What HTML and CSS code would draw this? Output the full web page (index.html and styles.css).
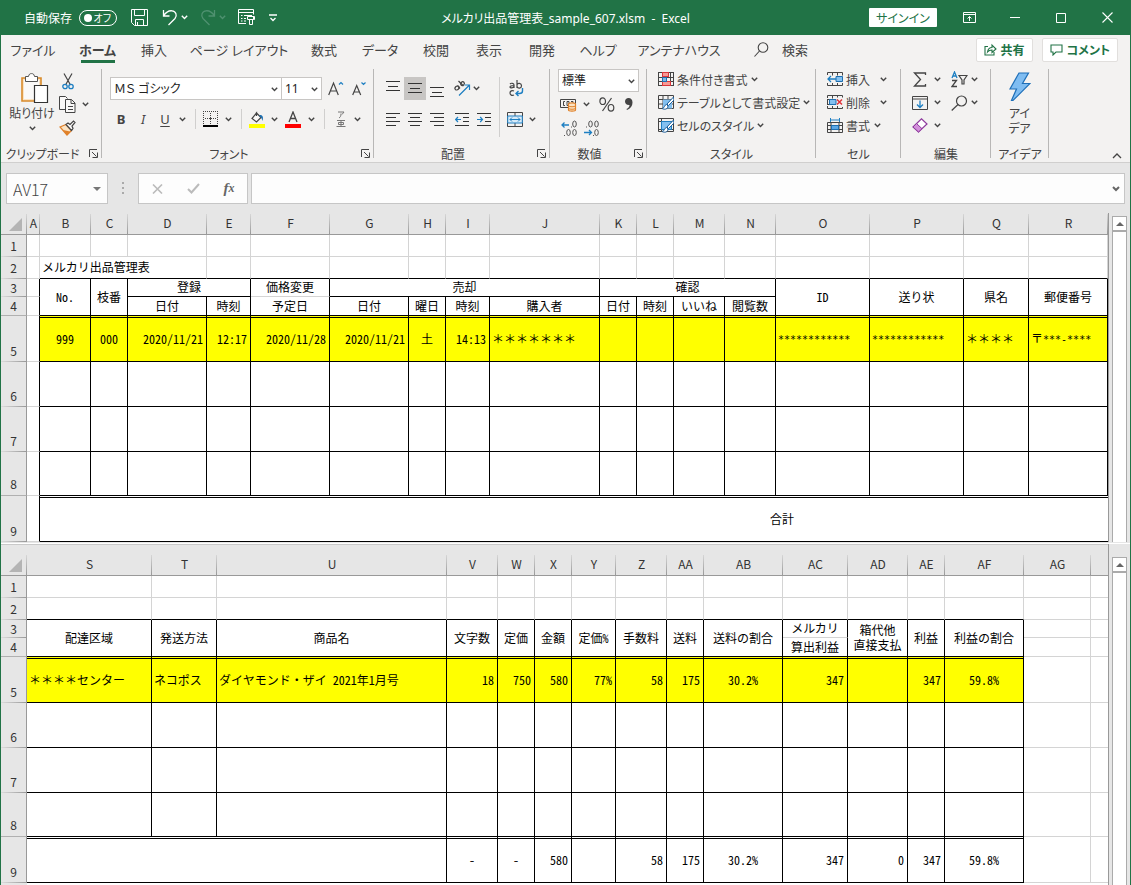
FILE: index.html
```html
<!DOCTYPE html>
<html lang="ja">
<head>
<meta charset="utf-8">
<meta name="viewport" content="width=device-width, initial-scale=1">
<title>メルカリ出品管理表_sample_607.xlsm - Excel</title>
<link rel="stylesheet" href="styles.css">
</head>
<body>
<svg class="defs" aria-hidden="true">
  <symbol id="chev" viewBox="0 0 7 5"><path d="M.8 .8 3.5 3.5 6.2 .8" fill="none" stroke="currentColor" stroke-width="1.4"/></symbol>
  <symbol id="launch" viewBox="0 0 9 9"><path d="M.5 8V.5H8M3 3l4.5 4.5M8.500 3.500v5h-5" fill="none" stroke="#444"/></symbol>
  <symbol id="tri" viewBox="0 0 8 4"><path d="M4 0 8 4H0Z" fill="#666"/></symbol>
  <symbol id="corner" viewBox="0 0 13 13"><path d="M13 0V13H0Z" fill="#b4b4b4"/></symbol>
</svg>
<div class="app">
  <header class="titlebar">
    <div class="quick">
      <label class="autosave" for="autosave">自動保存</label>
      <span class="toggle"><input type="checkbox" id="autosave"><span>オフ</span></span>
      <button class="q-save" aria-label="保存"><svg width="17" height="17" viewBox="0 0 17 17" fill="none" stroke="#fff"><path d="M.5 .5h16v16H3.500L.5 13.500ZM3.500 .5v6h10v-6M4.500 16.500v-6h8v6M6.500 13v3"/></svg></button>
      <button class="q-undo" aria-label="元に戻す"><svg width="16" height="17" viewBox="0 0 16 17" fill="none" stroke="#fff" stroke-width="1.3"><path d="M1.500 1v6h6M1.500 7C4 3 7 1.500 10 1.800c4 .4 5.500 4.700 3 7.700L6.500 16"/></svg></button>
      <button class="q-chev" aria-label="元に戻す履歴"><svg width="7" height="5"><use href="#chev"/></svg></button>
      <button class="q-undo dim" aria-label="やり直し"><svg width="16" height="17" viewBox="0 0 16 17" fill="none" stroke="currentColor" stroke-width="1.3"><path d="M14.500 1v6h-6M14.500 7C12 3 9 1.500 6 1.800 2 2.200.5 6.500 3 9.500L9.500 16"/></svg></button>
      <button class="q-chev dim" aria-label="やり直し履歴"><svg width="7" height="5"><use href="#chev"/></svg></button>
      <button class="q-form" aria-label="フォーム"><svg width="17" height="17" viewBox="0 0 17 17" fill="none" stroke="#fff"><path d="M8 14.500H.5V.5h15v5M.5 3.500h15M3 6.500h1.500M6 6.500h8M3 9.500h1.500M6 9.500h2M3 12h1.500M6 12h2M9.500 7.500h6v3h-6ZM11.500 10.500v5h3v-5M14.500 7.500h2v3h-1"/></svg></button>
      <button class="q-more" aria-label="クイック アクセス ツール バーのユーザー設定"><svg width="8" height="8" viewBox="0 0 8 8" fill="none" stroke="#fff" stroke-width="1.300"><path d="M0 1h8M1.500 4 4 6.500 6.500 4"/></svg></button>
    </div>
    <h1>メルカリ出品管理表_sample_607.xlsm&nbsp; -&nbsp; Excel</h1>
    <div class="wincontrols">
      <button class="signin">サインイン</button>
      <button aria-label="リボンの表示オプション"><svg width="13" height="11" viewBox="0 0 13 11" fill="none" stroke="#fff"><path d="M.5 .5h12v10H.5ZM.5 2.500h12M6.500 9V4.500M4.500 6.500l2-2 2 2"/></svg></button>
      <button aria-label="最小化"><svg width="10" height="11" viewBox="0 0 10 11" stroke="#fff"><path d="M0 5.500h10"/></svg></button>
      <button aria-label="最大化"><svg width="10" height="10" viewBox="0 0 10 10" fill="none" stroke="#fff"><path d="M.5 .5h9v9h-9Z"/></svg></button>
      <button aria-label="閉じる"><svg width="11" height="11" viewBox="0 0 11 11" fill="none" stroke="#fff" stroke-width="1.100"><path d="M.5 .5l10 10M10.500 .5l-10 10"/></svg></button>
    </div>
  </header>

  <nav class="tabs">
    <div class="tablist">
      <a href="#">ファイル</a><a href="#" class="active">ホーム</a><a href="#">挿入</a><a href="#">ページ レイアウト</a><a href="#">数式</a><a href="#">データ</a><a href="#">校閲</a><a href="#">表示</a><a href="#">開発</a><a href="#">ヘルプ</a><a href="#">アンテナハウス</a>
    </div>
    <button class="search"><svg width="15" height="15" viewBox="0 0 15 15" fill="none" stroke="#444" stroke-width="1.100"><circle cx="9" cy="5.500" r="4.800"/><path d="M5.500 9 .5 14.500"/></svg>検索</button>
    <div class="tabactions">
      <button><svg width="13" height="13" viewBox="0 0 13 13" fill="none" stroke="#217346" stroke-width="1.100"><path d="M4 3.500H1v8.500h9V9M3.500 9c.5-3 2-4.500 4.500-4.500V2l4 4-4 3.500V7C6 7 4.700 7.500 3.500 9Z"/></svg>共有</button>
      <button><svg width="13" height="12" viewBox="0 0 13 12" fill="none" stroke="#217346" stroke-width="1.100"><path d="M1 1h11v7H6l-3 3V8H1Z"/></svg>コメント</button>
    </div>
  </nav>

  <section class="ribbon" aria-label="リボン">
    <div class="group g-clip">
      <div class="gbody">
        <button class="paste"><svg width="28" height="31" viewBox="0 0 28 31" fill="none"><path d="M1 5h19v23H1Z" fill="#fbe3c3" stroke="#d98b2b" stroke-width="1.600"/><path d="M3 7h15v19H3Z" fill="#faf9f8"/><path d="M4.500 8.500v-5h3C8 1 9 .6 10.500 .6S13 1 13.500 3.500h3v5Z" fill="#fff" stroke="#555"/><path d="M13.500 12.500h13v17h-13Z" fill="#fff" stroke="#333" stroke-width="1.200"/></svg><span>貼り付け</span><svg width="7" height="5"><use href="#chev"/></svg></button>
        <div class="clipcol">
          <button aria-label="切り取り"><svg width="12" height="17" viewBox="0 0 12 17" fill="none"><path d="M2 .5 8.500 12M10 .5 3.500 12" stroke="#444" stroke-width="1.200"/><circle cx="3" cy="13.500" r="2.200" stroke="#1e7fc2" stroke-width="1.300"/><circle cx="9" cy="13.500" r="2.200" stroke="#1e7fc2" stroke-width="1.300"/></svg></button>
          <button aria-label="コピー" class="copy"><svg width="17" height="17" viewBox="0 0 17 17" fill="#faf9f8" stroke="#444"><path d="M7 13.500H.5V.5h6l2 2"/><path d="M6.500 3.500h6l3.500 3.500v9.500H6.500ZM12 3.500V7.500h4M9 10.500h5M9 13.500h5"/></svg><svg width="7" height="5"><use href="#chev"/></svg></button>
          <button aria-label="書式のコピー"><svg width="17" height="16" viewBox="0 0 17 16"><path d="M1 7 7 4.500l5.500 6L8 15Z" fill="#fbe3c3" stroke="#e0812a" stroke-width="1.300"/><path d="M4 10l7 1.500L8 15Z" fill="#e0812a"/><path d="M7 4.500l2-1.500 2 1.500 3.500-3.500 1.500 1.500-3 3.500 1 2.500-1.500 2Z" fill="#faf9f8" stroke="#444" stroke-width="1.200"/></svg></button>
        </div>
      </div>
      <div class="glabel"><span>クリップボード</span><button aria-label="クリップボードの詳細"><svg width="9" height="9"><use href="#launch"/></svg></button></div>
    </div>

    <div class="group g-font">
      <div class="gbody">
        <div class="fontrow1">
          <span class="combo"><select aria-label="フォント"><option>ＭＳ ゴシック</option></select><svg width="7" height="5"><use href="#chev"/></svg></span>
          <span class="combo"><select aria-label="フォント サイズ"><option>11</option></select><svg width="7" height="5"><use href="#chev"/></svg></span>
          <button aria-label="フォント サイズの拡大"><svg width="16" height="15" viewBox="0 0 16 15" fill="none" stroke="#444" stroke-width="1.200"><path d="M.7 14 5.500 2l4.800 12M2.500 10h6"/><path d="M11 3.500l2-2 2 2" stroke="#1e7fc2"/></svg></button>
          <button aria-label="フォント サイズの縮小"><svg width="15" height="15" viewBox="0 0 15 15" fill="none" stroke="#444" stroke-width="1.200"><path d="M.7 14 4.700 4.500l4 9.500M2.300 11h5"/><path d="M9.500 1.500l2 2 2-2" stroke="#1e7fc2"/></svg></button>
        </div>
        <div class="fontrow2">
          <button class="b">B</button><button class="i">I</button><button class="u">U</button><button aria-label="下線の種類"><svg width="7" height="5"><use href="#chev"/></svg></button>
          <i class="vsep"></i>
          <button aria-label="罫線"><svg width="16" height="16" viewBox="0 0 16 16" fill="#444" shape-rendering="crispEdges"><path d="M0 0h1v1H0ZM2 0h1v1H2ZM4 0h1v1H4ZM6 0h1v1H6ZM8 0h1v1H8ZM10 0h1v1h-1ZM12 0h1v1h-1ZM14 0h1v1h-1ZM0 2h1v1H0ZM0 4h1v1H0ZM0 6h1v1H0ZM0 8h1v1H0ZM0 10h1v1H0ZM0 12h1v1H0ZM14 2h1v1h-1ZM14 4h1v1h-1ZM14 6h1v1h-1ZM14 8h1v1h-1ZM14 10h1v1h-1ZM14 12h1v1h-1ZM7 2h1v1H7ZM7 4h1v1H7ZM7 10h1v1H7ZM7 12h1v1H7ZM2 7h1v1H2ZM4 7h1v1H4ZM10 7h1v1h-1ZM12 7h1v1h-1ZM6 7h3v1H6ZM7 6h1v3H7Z"/><path d="M0 14h15v2H0Z" fill="#000"/></svg></button>
          <button aria-label="罫線の種類"><svg width="7" height="5"><use href="#chev"/></svg></button>
          <i class="vsep"></i>
          <button aria-label="塗りつぶしの色"><svg width="17" height="17" viewBox="0 0 17 17" fill="none"><path d="M7 1.500 12 6.500 7.500 11 3 7.500 7.500 2V5" fill="#faf9f8" stroke="#444" stroke-width="1.200"/><path d="M11 4c3 0 3.500 2.500 2.500 6C12.500 7 12 6 10 5Z" fill="#1e6fb0"/><path d="M0 13h16v4H0Z" fill="#ff0"/></svg></button>
          <button aria-label="塗りつぶしの色の一覧"><svg width="7" height="5"><use href="#chev"/></svg></button>
          <button aria-label="フォントの色"><svg width="17" height="17" viewBox="0 0 17 17" fill="none"><path d="M4 11 8 1l4 10M5.500 7.500h5" stroke="#444" stroke-width="1.300"/><path d="M0 13h16v4H0Z" fill="#f00"/></svg></button>
          <button aria-label="フォントの色の一覧"><svg width="7" height="5"><use href="#chev"/></svg></button>
          <i class="vsep"></i>
          <button aria-label="ふりがな"><svg width="10" height="17" viewBox="0 0 10 17" fill="none" stroke="#777"><path d="M2 1h6L6 3.500M5 2.500C5 5 4.500 6 3 7M1 9.500h8M2.500 11.500h5v2h-5ZM5 9.500v6M.5 15.500h9"/></svg></button>
          <button aria-label="ふりがなの設定"><svg width="7" height="5"><use href="#chev"/></svg></button>
        </div>
      </div>
      <div class="glabel"><span>フォント</span><button aria-label="フォントの詳細"><svg width="9" height="9"><use href="#launch"/></svg></button></div>
    </div>

    <div class="group g-align">
      <div class="gbody">
        <div class="aligngrid">
          <button aria-label="上揃え"><svg width="14" height="20" viewBox="0 0 14 20" stroke="#333"><path d="M0 2.500h14M2 7.500h10M0 11.500h14"/></svg></button>
          <button aria-label="上下中央揃え" class="on"><svg width="14" height="20" viewBox="0 0 14 20" stroke="#333"><path d="M0 4.500h14M2 9.500h10M0 13.500h14"/></svg></button>
          <button aria-label="下揃え"><svg width="14" height="20" viewBox="0 0 14 20" stroke="#333"><path d="M0 8.500h14M2 13.500h10M0 17.500h14"/></svg></button>
          <button aria-label="方向"><svg width="18" height="17" viewBox="0 0 18 17" fill="none"><g stroke="#444" stroke-width="1.200"><ellipse cx="4" cy="8" rx="2.200" ry="1.800" transform="rotate(-45 4 8)"/><path d="M4.500 5.500 7 8.500"/><path d="M5.500 1 10.500 6"/><ellipse cx="9.500" cy="3.700" rx="2" ry="1.700" transform="rotate(-45 9.500 3.700)"/></g><path d="M6 15.500 16 5.500M11.500 5h5v5" stroke="#1e7fc2" stroke-width="1.200"/></svg></button>
          <button class="start" aria-label="方向の一覧"><svg width="7" height="5"><use href="#chev"/></svg></button>
          <button aria-label="左揃え"><svg width="14" height="14" viewBox="0 0 14 14" stroke="#333"><path d="M0 .5h14M0 4.500h10M0 8.500h14M0 12.500h10"/></svg></button>
          <button aria-label="中央揃え"><svg width="14" height="14" viewBox="0 0 14 14" stroke="#333"><path d="M0 .5h14M2 4.500h10M0 8.500h14M2 12.500h10"/></svg></button>
          <button aria-label="右揃え"><svg width="14" height="14" viewBox="0 0 14 14" stroke="#333"><path d="M0 .5h14M4 4.500h10M0 8.500h14M4 12.500h10"/></svg></button>
          <button aria-label="インデントを減らす"><svg width="14" height="14" viewBox="0 0 14 14" fill="none" stroke="#333"><path d="M0 .5h14M8 4.500h6M8 8.500h6M0 12.500h14"/><path d="M6 6.500H.7M3 4 .7 6.500 3 9" stroke="#1e7fc2" stroke-width="1.200"/></svg></button>
          <button aria-label="インデントを増やす"><svg width="14" height="14" viewBox="0 0 14 14" fill="none" stroke="#333"><path d="M0 .5h14M8 4.500h6M8 8.500h6M0 12.500h14"/><path d="M0 6.500h5.500M3.200 4l2.300 2.500L3.200 9" stroke="#1e7fc2" stroke-width="1.200"/></svg></button>
        </div>
        <div class="wrapcol">
          <button aria-label="折り返して全体を表示する"><svg width="15" height="17" viewBox="0 0 15 17" fill="none" stroke="#444" stroke-width="1.200"><path d="M1 4c1-1.200 4-1 4 1v3M5 5.500C2.500 5.500 1 6 1 7s3 1.300 4-.5M8 0v8M8 5c.5-2.500 4.500-2 4.500 .7S9 9 8 6.500M5 11c-2-1-4 0-4 2s2 3 4 2"/><path d="M13.500 8v3c0 1.500-1 2.500-3 2.500H7M9.500 11 7 13.500 9.500 16" stroke="#1e7fc2" stroke-width="1.400"/></svg></button>
          <button aria-label="セルを結合して中央揃え" class="merge"><svg width="16" height="15" viewBox="0 0 16 15" fill="none"><path d="M.5 .5h15v14H.5ZM8 0v4M8 11v4" stroke="#444"/><path d="M.7 4h14.600v7H.7Z" fill="#d6eaf8" stroke="#1e7fc2"/><path d="M3 7.500h10M5 5.500l-2 2 2 2M11 5.500l2 2-2 2" stroke="#1e7fc2"/></svg><svg width="7" height="5"><use href="#chev"/></svg></button>
        </div>
      </div>
      <div class="glabel"><span>配置</span><button aria-label="配置の詳細"><svg width="9" height="9"><use href="#launch"/></svg></button></div>
    </div>

    <div class="group g-num">
      <div class="gbody">
        <span class="combo"><select aria-label="数値の書式"><option>標準</option></select><svg width="7" height="5"><use href="#chev"/></svg></span>
        <div class="numrow">
          <button aria-label="通貨表示形式"><svg width="17" height="15" viewBox="0 0 17 15" fill="none"><path d="M.5 2.500h15v8H.5Z" stroke="#444"/><path d="M5 4.500H3.500v4H5M7 4.500v4h2v-4ZM11 4.500h2v2" stroke="#444"/><path d="M8.500 7c0-1.500 7-1.500 7 0v6c0 1.500-7 1.500-7 0Z" fill="#fbe3c3" stroke="#e0812a" stroke-width="1.200"/><path d="M8.500 9c1 1 6 1 7 0M8.500 11.500c1 1 6 1 7 0" stroke="#e0812a"/></svg></button>
          <button aria-label="通貨の一覧"><svg width="7" height="5"><use href="#chev"/></svg></button>
          <button aria-label="パーセント スタイル"><svg width="16" height="15" viewBox="0 0 16 15" fill="none" stroke="#444" stroke-width="1.200"><ellipse cx="3.700" cy="4.200" rx="2.800" ry="3.300"/><ellipse cx="12" cy="10.800" rx="2.800" ry="3.300"/><path d="M12.500 1 3.500 14"/></svg></button>
          <button aria-label="桁区切りスタイル"><svg width="10" height="14" viewBox="0 0 10 14"><path d="M4.500 1C7 1 8.500 2.500 8.500 5.500c0 3.500-2 6-5.500 7.500l-.5-1c2-1 3-2.200 3-4C2.500 8.200 1 6.500 1 4.500S2.500 1 4.500 1Z" fill="#444"/></svg></button>
        </div>
        <div class="decrow">
          <button aria-label="小数点以下の表示桁数を増やす"><svg width="17" height="17" viewBox="0 0 17 17" fill="none" stroke="#555"><ellipse cx="13.500" cy="4" rx="1.800" ry="3"/><path d="M10 7h1M3 15.500h1"/><ellipse cx="7.500" cy="12.500" rx="1.800" ry="3"/><ellipse cx="13.500" cy="12.500" rx="1.800" ry="3"/><path d="M8 5H1M3.500 2.500 1 5l2.500 2.500" stroke="#1e7fc2" stroke-width="1.300"/></svg></button>
          <button aria-label="小数点以下の表示桁数を減らす"><svg width="17" height="17" viewBox="0 0 17 17" fill="none" stroke="#555"><path d="M3 7h1M10 15.500h1"/><ellipse cx="7.500" cy="4" rx="1.800" ry="3"/><ellipse cx="13.500" cy="4" rx="1.800" ry="3"/><ellipse cx="13.500" cy="12.500" rx="1.800" ry="3"/><path d="M1 12.500h7.500M6 10l2.500 2.500L6 15" stroke="#1e7fc2" stroke-width="1.300"/></svg></button>
        </div>
      </div>
      <div class="glabel"><span>数値</span><button aria-label="数値の詳細"><svg width="9" height="9"><use href="#launch"/></svg></button></div>
    </div>

    <div class="group g-style">
      <div class="gbody rows">
        <button><svg width="16" height="15" viewBox="0 0 16 15" shape-rendering="crispEdges" fill="none"><path d="M.5 .5h15v13H.5ZM.5 5h15M.5 9.500h15M4 .5v13M12 .5v13" stroke="#444"/><path d="M4 .5h6v4H4ZM4 9.500h8v4H4Z" fill="#f79a94" stroke="#d9363b"/><path d="M4 5h4v4H4Z" fill="#83b9e6" stroke="#1e6fb0"/></svg>条件付き書式<svg width="7" height="5"><use href="#chev"/></svg></button>
        <button><svg width="16" height="15" viewBox="0 0 16 15" fill="none"><path d="M.5 .5h15v13H.5ZM.5 4.500h15M.5 9h15M5 .5v13M10 .5v13" stroke="#444"/><path d="M5 4.500h9v9H5Z" fill="#83c0f0"/><path d="M15.500 2 9 9l1.500 1.500L16 5ZM8.500 9.500C6 10 7 13 4 13.500c3 1.500 6 .5 6-2.500Z" fill="#fff" stroke="#1e5f9a"/></svg>テーブルとして書式設定<svg width="7" height="5"><use href="#chev"/></svg></button>
        <button><svg width="16" height="15" viewBox="0 0 16 15" fill="none"><path d="M.5 .5h15v13H.5ZM3.500 .5v13M.5 3.500h15M.5 11.500h15" stroke="#444"/><path d="M3.500 3.500h10v8h-10Z" fill="#83c0f0" stroke="#1e7fc2"/><path d="M15.500 2 9 9l1.500 1.500L16 5ZM8.500 9.500C6 10 7 13 4 13.500c3 1.500 6 .5 6-2.500Z" fill="#fff" stroke="#1e5f9a"/></svg>セルのスタイル<svg width="7" height="5"><use href="#chev"/></svg></button>
      </div>
      <div class="glabel"><span>スタイル</span></div>
    </div>

    <div class="group g-cell">
      <div class="gbody rows">
        <button><svg width="16" height="15" viewBox="0 0 16 15" fill="none"><path d="M.5 3V.5h15v3M5.500 .5v3M10.500 .5v3M.5 11v2.500h15V11M5.500 11v2.500M10.500 11v2.500" stroke="#444"/><path d="M9 4.500h6.500v5H9Z" fill="#83c0f0" stroke="#1e6fb0"/><path d="M9 7H1M4 4 1 7l3 3" stroke="#1e7fc2" stroke-width="1.300"/></svg>挿入<svg class="push" width="7" height="5"><use href="#chev"/></svg></button>
        <button><svg width="16" height="15" viewBox="0 0 16 15" fill="none"><path d="M.5 3V.5h15v2M5.500 .5v3M10.500 .5v2M.5 11v2.500h15V12M5.500 11v2.500M10.500 11v2.500M.5 4v6M.5 4.500H3M.5 9.500H3" stroke="#444"/><path d="M2.500 4.500H9v5H2.500Z" fill="#83c0f0" stroke="#1e6fb0"/><path d="M10 4.500l5 5M15 4.500l-5 5" stroke="#e0343b" stroke-width="1.500"/></svg>削除<svg class="push" width="7" height="5"><use href="#chev"/></svg></button>
        <button><svg width="16" height="16" viewBox="0 0 16 16" fill="none"><path d="M.5 4.500h15v10H.5ZM.5 7.500h15M.5 11.500h15M4 4.500v10M12 4.500v10" stroke="#444"/><path d="M4.500 7.500h7v4h-7Z" fill="#5aa7e6" stroke="#1e6fb0"/><path d="M3.500 2h9M3.500 0v4M12.500 0v4" stroke="#1e7fc2"/></svg>書式<svg class="near" width="7" height="5"><use href="#chev"/></svg></button>
      </div>
      <div class="glabel"><span>セル</span></div>
    </div>

    <div class="group g-edit">
      <div class="gbody editgrid">
        <button aria-label="オート SUM"><svg width="14" height="15" viewBox="0 0 14 15" fill="none" stroke="#444" stroke-width="1.300"><path d="M12.500 3V1H1.500l6 6.500-6 6.500h11v-2"/></svg></button><button aria-label="オート SUM の一覧"><svg width="7" height="5"><use href="#chev"/></svg></button>
        <button class="second-tool" aria-label="並べ替えとフィルター"><svg width="17" height="17" viewBox="0 0 17 17" fill="none"><path d="M1 7 3.500 1 6 7M1.800 5h3.400" stroke="#1e7fc2" stroke-width="1.300"/><path d="M1 9.500h4.500L1 15.500h5" stroke="#444" stroke-width="1.300"/><path d="M8 4.500h8L13 9v4l-2 0V9Z" stroke="#444" stroke-width="1.200"/></svg></button><button aria-label="並べ替えの一覧"><svg width="7" height="5"><use href="#chev"/></svg></button>
        <button aria-label="フィル"><svg width="16" height="14" viewBox="0 0 16 14" fill="none"><path d="M.5 .5h15v13H.5ZM.5 3h15" stroke="#444"/><path d="M8 4.500v7M5 8.500l3 3 3-3" stroke="#1e7fc2" stroke-width="1.300"/></svg></button><button aria-label="フィルの一覧"><svg width="7" height="5"><use href="#chev"/></svg></button>
        <button class="second-tool" aria-label="検索と選択"><svg width="17" height="16" viewBox="0 0 17 16" fill="none" stroke="#444" stroke-width="1.200"><circle cx="10.500" cy="6" r="5"/><path d="M7 9.500.7 15.500"/></svg></button><button aria-label="検索の一覧"><svg width="7" height="5"><use href="#chev"/></svg></button>
        <button aria-label="クリア"><svg width="16" height="15" viewBox="0 0 16 15"><path d="M1 9 9.500 .8 15 6 6.500 14Z" fill="#fff" stroke="#8e3a9d" stroke-width="1.200"/><path d="M1 9 4.500 5.500 10 10.700 6.500 14Z" fill="#d38fdb" stroke="#8e3a9d"/></svg></button><button aria-label="クリアの一覧"><svg width="7" height="5"><use href="#chev"/></svg></button>
      </div>
      <div class="glabel"><span>編集</span></div>
    </div>

    <div class="group g-idea">
      <div class="gbody"><button class="idea"><svg width="22" height="30" viewBox="0 0 22 30"><path d="M10 1h9.500l-6 10.500H21L4 28.500H2.500L7.500 17H1Z" fill="#7fbdf2" stroke="#1e6fb8" stroke-width="1.200"/></svg><span>アイ<br>デア</span></button></div>
      <div class="glabel"><span>アイデア</span></div>
    </div>
    <button class="collapse" aria-label="リボンを折りたたむ"><svg width="10" height="6" viewBox="0 0 10 6" fill="none" stroke="#444" stroke-width="1.300"><path d="M1 5 5 1l4 4"/></svg></button>
  </section>

  <section class="formulabar">
    <div class="namebox"><input type="text" value="AV17" aria-label="名前ボックス"><svg width="8" height="4" viewBox="0 0 8 4"><path d="M0 0h8L4 4Z" fill="#777"/></svg></div>
    <svg class="dots" width="3" height="13" viewBox="0 0 3 13" fill="#aaa"><path d="M0 0h2v2H0ZM0 5h2v2H0ZM0 10h2v2H0Z"/></svg>
    <div class="fxbox">
      <button aria-label="キャンセル"><svg width="11" height="10" viewBox="0 0 11 10" stroke="#bbb" stroke-width="1.600"><path d="M1 .5l9 9M10 .5l-9 9"/></svg></button>
      <button aria-label="入力"><svg width="13" height="11" viewBox="0 0 13 11" fill="none" stroke="#bbb" stroke-width="2"><path d="M1 6l3.500 3.500L12 1"/></svg></button>
      <button class="fx" aria-label="関数の挿入">f<small>x</small></button>
    </div>
    <div class="formula"><input type="text" aria-label="数式バー"><svg width="8" height="6" viewBox="0 0 8 6" fill="none" stroke="#666" stroke-width="2"><path d="M1 1l3 3 3-3"/></svg></div>
  </section>

  <section class="pane">
    <div class="gridwrap">
      <table class="sheet">
        <colgroup><col class="w26"><col class="w13"><col class="w51"><col class="w37"><col class="w79"><col class="w44"><col class="w79"><col class="w79"><col class="w37"><col class="w44"><col class="w110"><col class="w37"><col class="w37"><col class="w51"><col class="w51"><col class="w94"><col class="w94"><col class="w65"><col></colgroup>
        <thead><tr><th class="all"><svg width="13" height="13"><use href="#corner"/></svg></th><th>A</th><th>B</th><th>C</th><th>D</th><th>E</th><th>F</th><th>G</th><th>H</th><th>I</th><th>J</th><th>K</th><th>L</th><th>M</th><th>N</th><th>O</th><th>P</th><th>Q</th><th>R</th></tr></thead>
        <tbody>
          <tr class="r22"><th>1</th><td></td><td></td><td></td><td></td><td></td><td></td><td></td><td></td><td></td><td></td><td></td><td></td><td></td><td></td><td></td><td></td><td></td><td></td></tr>
          <tr class="r22 top"><th>2</th><td class="out"></td><td colspan="3" class="left">メルカリ出品管理表</td><td></td><td></td><td></td><td></td><td></td><td></td><td></td><td></td><td></td><td></td><td></td><td></td><td></td><td></td></tr>
          <tr class="r18 k"><th>3</th><td class="edge"></td><td rowspan="2" class="nb">No.</td><td rowspan="2" class="nb">枝番</td><td colspan="2">登録</td><td class="soft">価格変更</td><td colspan="4">売却</td><td colspan="4">確認</td><td rowspan="2" class="nb">ID</td><td rowspan="2" class="nb">送り状</td><td rowspan="2" class="nb">県名</td><td rowspan="2" class="nb">郵便番号</td></tr>
          <tr class="r18 k last"><th>4</th><td class="edge"></td><td>日付</td><td>時刻</td><td>予定日</td><td>日付</td><td>曜日</td><td>時刻</td><td>購入者</td><td>日付</td><td>時刻</td><td>いいね</td><td>閲覧数</td></tr>
          <tr class="r47 k dbl hi"><th>5</th><td class="edge"></td><td>999</td><td>000</td><td class="right">2020/11/21</td><td class="right">12:17</td><td class="right">2020/11/28</td><td class="right">2020/11/21</td><td>土</td><td class="right">14:13</td><td class="left full">＊＊＊＊＊＊＊</td><td></td><td></td><td></td><td></td><td class="left stars">************</td><td class="left stars">************</td><td class="left full">＊＊＊＊</td><td class="left">〒<span class="stars">***-****</span></td></tr>
          <tr class="r45 k"><th>6</th><td class="edge"></td><td></td><td></td><td></td><td></td><td></td><td></td><td></td><td></td><td></td><td></td><td></td><td></td><td></td><td></td><td></td><td></td><td></td></tr>
          <tr class="r45 k"><th>7</th><td class="edge"></td><td></td><td></td><td></td><td></td><td></td><td></td><td></td><td></td><td></td><td></td><td></td><td></td><td></td><td></td><td></td><td></td><td></td></tr>
          <tr class="r43 k last"><th>8</th><td class="edge"></td><td></td><td></td><td></td><td></td><td></td><td></td><td></td><td></td><td></td><td></td><td></td><td></td><td></td><td></td><td></td><td></td><td></td></tr>
          <tr class="r47 k dbl"><th>9</th><td class="edge"></td><td colspan="17" class="total">合計</td></tr>
        </tbody>
      </table>
    </div>
    <div class="scroll"><button aria-label="上へスクロール"><svg width="8" height="4"><use href="#tri"/></svg></button><div class="track"></div></div>
  </section>

  <section class="pane second">
    <div class="gridwrap">
      <table class="sheet">
        <colgroup><col class="w26"><col class="w125"><col class="w65"><col class="w230"><col class="w51"><col class="w37"><col class="w37"><col class="w44"><col class="w51"><col class="w37"><col class="w79"><col class="w65"><col class="w60"><col class="w37"><col class="w79"><col class="w67"><col></colgroup>
        <thead><tr><th class="all"><svg width="13" height="13"><use href="#corner"/></svg></th><th>S</th><th>T</th><th>U</th><th>V</th><th>W</th><th>X</th><th>Y</th><th>Z</th><th>AA</th><th>AB</th><th>AC</th><th>AD</th><th>AE</th><th>AF</th><th>AG</th><th class="tail"></th></tr></thead>
        <tbody>
          <tr class="r22"><th>1</th><td></td><td></td><td></td><td></td><td></td><td></td><td></td><td></td><td></td><td></td><td></td><td></td><td></td><td></td><td></td><td class="tail"></td></tr>
          <tr class="r22 top"><th>2</th><td></td><td></td><td></td><td></td><td></td><td></td><td></td><td></td><td></td><td></td><td></td><td></td><td></td><td></td><td class="out"></td><td class="out tail"></td></tr>
          <tr class="r18 k"><th>3</th><td rowspan="2" class="nb">配達区域</td><td rowspan="2" class="nb">発送方法</td><td rowspan="2" class="nb">商品名</td><td rowspan="2" class="nb">文字数</td><td rowspan="2" class="nb">定価</td><td rowspan="2" class="nb">金額</td><td rowspan="2" class="nb">定価%</td><td rowspan="2" class="nb">手数料</td><td rowspan="2" class="nb">送料</td><td rowspan="2" class="nb">送料の割合</td><td class="soft">メルカリ</td><td rowspan="2" class="nb">箱代他<br>直接支払</td><td rowspan="2" class="nb">利益</td><td rowspan="2" class="nb">利益の割合</td><td class="out"></td><td class="out tail"></td></tr>
          <tr class="r18 k last"><th>4</th><td>算出利益</td><td class="out"></td><td class="out tail"></td></tr>
          <tr class="r47 k dbl hi"><th>5</th><td class="left full">＊＊＊＊センター</td><td class="left">ネコポス</td><td class="left">ダイヤモンド・ザイ 2021年1月号</td><td class="right">18</td><td class="right">750</td><td class="right">580</td><td class="right">77%</td><td class="right">58</td><td class="right">175</td><td>30.2%</td><td class="right">347</td><td></td><td class="right">347</td><td>59.8%</td><td class="out"></td><td class="out tail"></td></tr>
          <tr class="r45 k"><th>6</th><td></td><td></td><td></td><td></td><td></td><td></td><td></td><td></td><td></td><td></td><td></td><td></td><td></td><td></td><td class="out"></td><td class="out tail"></td></tr>
          <tr class="r45 k"><th>7</th><td></td><td></td><td></td><td></td><td></td><td></td><td></td><td></td><td></td><td></td><td></td><td></td><td></td><td></td><td class="out"></td><td class="out tail"></td></tr>
          <tr class="r43 k last"><th>8</th><td></td><td></td><td></td><td></td><td></td><td></td><td></td><td></td><td></td><td></td><td></td><td></td><td></td><td></td><td class="out"></td><td class="out tail"></td></tr>
          <tr class="r47 k dbl"><th>9</th><td colspan="3"></td><td>-</td><td>-</td><td class="right">580</td><td></td><td class="right">58</td><td class="right">175</td><td>30.2%</td><td class="right">347</td><td class="right">0</td><td class="right">347</td><td>59.8%</td><td class="out"></td><td class="out tail"></td></tr>
        </tbody>
      </table>
    </div>
    <div class="scroll"><button aria-label="上へスクロール"><svg width="8" height="4"><use href="#tri"/></svg></button><div class="track"></div></div>
  </section>
</div>
</body>
</html>
```
FILE: styles.css
```css
* { box-sizing: border-box; }
body {
  margin: 0;
  font-family: "Noto Sans", "Noto Sans CJK JP", sans-serif;
  font-size: 12px;
  font-feature-settings: "palt";
  color: #444;
  background: #e6e6e6;
}
button, select, input {
  font: inherit;
  font-feature-settings: inherit;
  color: inherit;
  margin: 0;
  padding: 0;
  border: 0;
  background: none;
}
button {
  display: flex;
  align-items: center;
  justify-content: center;
  white-space: nowrap;
}
svg { display: block; flex: none; }
.defs { position: absolute; width: 0; height: 0; }
.app {
  display: flex;
  flex-direction: column;
  min-height: 100vh;
  border: solid #217346;
  border-width: 0 1px;
}

/* Title bar */
.titlebar {
  display: grid;
  grid-template-columns: 1fr auto 1fr;
  align-items: center;
  height: 35px;
  background: #217346;
  color: #fff;
}
.titlebar h1 { margin: 0; font-size: 12px; font-weight: 400; white-space: nowrap; }
.quick { display: flex; align-items: center; padding-left: 23px; }
.autosave { width: 55px; white-space: nowrap; }
.toggle {
  display: flex;
  align-items: center;
  justify-content: space-between;
  width: 38px;
  height: 16px;
  padding: 0 5px 0 4px;
  border: 1px solid #fff;
  border-radius: 8px;
  font-size: 10px;
}
.toggle input { appearance: none; width: 8px; height: 8px; border-radius: 50%; background: #fff; }
.q-save { width: 45px; }
.q-undo { width: 16px; }
.q-chev { width: 22px; padding-left: 3px; justify-content: flex-start; }
.q-form { width: 17px; }
.q-more { width: 36px; }
.dim { color: #4f9170; }
.wincontrols { display: flex; align-items: center; justify-content: flex-end; }
.wincontrols button { width: 46px; height: 35px; }
.wincontrols .signin { width: 68px; height: 19px; margin-right: 9px; background: #fff; color: #217346; border-radius: 1px; }

/* Tabs */
.tabs { display: flex; height: 31px; background: #f3f2f1; }
.tablist {
  display: grid;
  grid-template-columns: 62px 67px 46px 124px 46px 66px 46px 60px 46px 66px 96px;
  padding-left: 1px;
  font-size: 13px;
}
.tablist a {
  display: flex;
  align-items: center;
  justify-content: center;
  padding: 1px 0 4px;
  color: #444;
  text-decoration: none;
  white-space: nowrap;
}
.tablist .active { position: relative; font-weight: 700; }
.tablist .active::after {
  content: "";
  position: absolute;
  left: 17px;
  right: 16px;
  bottom: 3px;
  height: 3px;
  background: #217346;
}
.search { gap: 13px; margin-left: 27px; padding-bottom: 2px; font-size: 13px; }
.tabactions { display: flex; align-items: center; gap: 9px; margin-left: auto; padding: 0 12px 2px 0; }
.tabactions button {
  height: 24px;
  gap: 4px;
  padding: 0 7px;
  background: #fff;
  border: 1px solid #e1dfdd;
  border-radius: 2px;
  color: #217346;
  font-weight: 700;
}

/* Ribbon */
.ribbon { position: relative; display: flex; height: 97px; background: #f3f2f1; border-bottom: 1px solid #d0cfce; }
.group { position: relative; display: flex; flex-direction: column; }
.group::after { content: ""; position: absolute; right: 0; top: 3px; bottom: 4px; width: 1px; background: #b8b7b6; }
.gbody { flex: 1; }
.glabel { display: flex; align-items: center; height: 17px; }
.glabel span { flex: 1; text-align: center; white-space: nowrap; }
.glabel button { width: 18px; height: 16px; }
.g-clip { width: 101px; }
.g-font { width: 272px; }
.g-align { width: 176px; }
.g-num { width: 97px; }
.g-style { width: 169px; }
.g-cell { width: 85px; }
.g-edit { width: 90px; }
.g-idea { width: 58px; }

.g-clip .gbody { display: flex; padding: 7px 0 0 8px; }
.paste { flex-direction: column; justify-content: flex-start; width: 46px; line-height: 19px; }
.paste svg:last-child { margin-top: 3px; }
.paste svg:first-child { margin-left: 5px; }
.clipcol { display: flex; flex-direction: column; gap: 6px; padding-left: 4px; }
.clipcol button { width: 17px; height: 17px; }
.clipcol .copy { width: 30px; gap: 6px; justify-content: flex-start; }

.combo { position: relative; display: block; height: 23px; background: #fff; border: 1px solid #c8c6c4; }
.combo select { appearance: none; display: block; width: 100%; height: 21px; padding: 0 3px; color: #222; font-size: 12px; }
.combo svg { position: absolute; right: 3px; top: 9px; pointer-events: none; }
.g-font .gbody { padding: 11px 0 0 8px; }
.fontrow1 { display: grid; grid-template-columns: 172px 40px 27px 20px; }
.fontrow1 .combo + .combo { border-left-width: 0; }
.fontrow2 {
  display: grid;
  grid-template-columns: 22px 22px 22px 12px 14px 18px 16px 10px 22px 12px 26px 10px 16px 18px 14px;
  height: 28px;
  margin-top: 5px;
}
.fontrow2 .b { font-weight: 700; }
.fontrow2 .i { font-family: "Noto Sans", serif; font-style: italic; }
.fontrow2 .u { text-decoration: underline; text-underline-offset: 2px; }
.fontrow2 button { font-size: 13px; }
.vsep { justify-self: center; align-self: center; width: 1px; height: 20px; background: #d0cfce; }

.g-align .gbody { display: flex; padding: 11px 0 0 8px; }
.aligngrid { display: grid; grid-template-columns: 22px 22px 25px 22px 22px; grid-auto-rows: 23px; row-gap: 8px; }
.aligngrid .on { background: #c8c6c4; }
.aligngrid .start { justify-content: flex-start; }
.aligngrid button:nth-child(5n+3) { padding-right: 3px; }
.wrapcol { display: flex; flex-direction: column; gap: 8px; height: 60px; margin-left: 4px; padding-left: 7px; border-left: 1px solid #d0cfce; }
.wrapcol button { height: 23px; width: 18px; }
.wrapcol .merge { width: 32px; gap: 6px; justify-content: flex-start; }

.g-num .gbody { padding: 3px 8px 0; }
.numrow { display: grid; grid-template-columns: 21px 14px 27px 18px; height: 24px; }
.decrow { display: flex; gap: 5px; height: 24px; padding-left: 3px; }

.rows { display: flex; flex-direction: column; padding: 2px 0 0 11px; }
.rows button { justify-content: flex-start; height: 23px; gap: 3px; }
.rows .push { margin-left: 7px; }
.rows .near { margin-left: 1px; }

.editgrid { display: grid; grid-template-columns: 24px 11px 26px 11px; grid-auto-rows: 23px; padding: 2px 0 0 7px; }
.editgrid .second-tool { padding-left: 6px; }
.idea { flex-direction: column; width: 57px; padding-top: 6px; line-height: 15px; gap: 4px; }
.collapse { position: absolute; right: 8px; bottom: 3px; }

/* Formula bar */
.formulabar { display: flex; align-items: flex-start; height: 50px; padding: 10px 5px 0; }
.namebox, .fxbox, .formula { position: relative; display: flex; align-items: center; height: 31px; background: #fdfdfd; border: 1px solid #c6c6c6; }
.namebox { width: 102px; }
.namebox input { width: 80px; height: 29px; padding: 1px 0 0 6px; font-family: "Noto Sans CJK JP", sans-serif; font-size: 16px; font-weight: 300; }
.namebox svg { margin-left: 6px; }
.dots { margin: 9px 13px 0 14px; }
.fxbox { width: 110px; }
.fxbox button { width: 36px; height: 29px; }
.fxbox .fx { font-family: "Liberation Serif", serif; font-style: italic; font-size: 15px; font-weight: 700; color: #666; }
.fx small { font-size: 12px; }
.formula { flex: 1; margin-left: 3px; }
.formula input { flex: 1; height: 29px; padding: 0 6px; }
.formula svg { margin-right: 4px; }

/* Worksheet panes */
.pane { display: flex; padding-bottom: 1px; }
.second { flex: 1; border-top: 1px solid #fff; padding: 0; }
.gridwrap { flex: 1; min-width: 0; background: linear-gradient(to right, #e6e6e6 26px, #fff 26px); border-right: 1px solid #999; }
.sheet {
  width: 100%;
  table-layout: fixed;
  border-collapse: separate;
  border-spacing: 0;
  font-family: "Noto Sans CJK JP", sans-serif;
  color: #000;
}
.w13 { width: 13px; }
.w26 { width: 26px; }
.w37 { width: 37px; }
.w44 { width: 44px; }
.w51 { width: 51px; }
.w60 { width: 60px; }
.w65 { width: 65px; }
.w67 { width: 67px; }
.w79 { width: 79px; }
.w94 { width: 94px; }
.w110 { width: 110px; }
.w125 { width: 125px; }
.w230 { width: 230px; }
.sheet th { padding: 0; font-weight: 400; color: #333; background-color: #e6e6e6; background-repeat: no-repeat; }
.sheet thead tr { height: 22px; }
.sheet thead th {
  padding-bottom: 1px;
  border-bottom: 1px solid #999;
  line-height: 20px;
  background-image: linear-gradient(to bottom, #d6d6d6, #999);
  background-size: 1px 20px;
  background-position: right bottom;
  vertical-align: bottom;
}
.second thead tr { height: 32px; }
.second thead th { border-top: 1px solid #c9c9c9; }
.sheet thead .all { padding: 0 0 3px 8px; }
.sheet thead .tail { background-image: none; }
.sheet tbody th {
  padding-bottom: 3px;
  border-right: 1px solid #999;
  line-height: 17px;
  vertical-align: bottom;
  background-image: linear-gradient(to right, #dcdcdc, #999);
  background-size: 100% 1px;
  background-position: left bottom;
}
.sheet .r18 th { padding: 0 0 1px; }
.sheet .last th { background-image: none; }
.sheet .dbl th { border-top: 1px solid #b0b0b0; }
.r18 { height: 18px; }
.r22 { height: 22px; }
.r43 { height: 43px; }
.r45 { height: 45px; }
.r47 { height: 47px; }
.sheet td {
  padding: 0 0 2px;
  background: #fff;
  border: solid #d4d4d4;
  border-width: 0 1px 1px 0;
  font-feature-settings: "hwid";
  line-height: 15px;
  text-align: center;
  white-space: nowrap;
  overflow: hidden;
}
.sheet .left { text-align: left; padding-left: 2px; }
.sheet .right { text-align: right; padding-right: 3px; }
.sheet .full { font-feature-settings: normal; }
.stars { font-family: "DejaVu Sans Mono", monospace; font-size: 10px; }
.sheet td.stars { padding-top: 2px; }
.top td { border-bottom-color: #000; }
.k td { border-color: #000; }
.k .soft { border-bottom-color: #d4d4d4; }
.last td, .k .nb { border-bottom-width: 0; }
.dbl td { border-top: 3px double #000; }
.hi td { background: #ff0; }
.sheet .edge, .sheet .out { background: #fff; border-bottom-color: #d4d4d4; }
.sheet .out { border-right-color: #d4d4d4; }
.dbl .edge, .dbl .out { border-top: 1px solid #d4d4d4; }
.sheet td.tail { border-right-width: 0; }
.sheet .total { padding-left: 416px; border-right-width: 0; }

.scroll { display: flex; flex-direction: column; width: 21px; padding: 3px 3px 0; }
.second .scroll { padding-top: 13px; }
.scroll button { width: 15px; height: 15px; background: #fff; border: 1px solid #ababab; }
.track { flex: 1; width: 15px; background: #fff; border: 1px solid #ababab; border-bottom: 0; }
```
